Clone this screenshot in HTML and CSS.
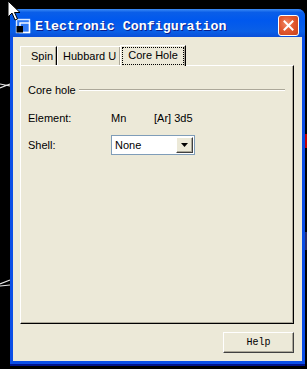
FILE: index.html
```html
<!DOCTYPE html>
<html>
<head>
  <meta charset="UTF-8">
  <title>Electronic Configuration</title>
  <link rel="stylesheet" href="styles.css">
</head>
<body>
  <svg class="backdrop" width="307" height="369" viewBox="0 0 307 369">
    <path d="M0 88 L10 84 M0 84 L10 86" stroke="#e8e8e8" stroke-width="1.2"/>
    <path d="M0 284 L10 280 M0 286 L10 285" stroke="#e8e8e8" stroke-width="1.2"/>
    <rect x="303" y="134" width="4" height="14" fill="#c00000"/>
    <rect x="303" y="232" width="4" height="18" fill="#2a2c6a"/>
  </svg>
  <div class="window">
    <div class="titlebar">
      <svg class="app-icon" width="16" height="16" viewBox="0 0 16 16">
        <rect x="1.5" y="1.5" width="13" height="13" fill="#2f7af5" stroke="#d8e8ff" stroke-width="1.4"/>
        <rect x="5" y="5" width="9.5" height="9.5" fill="none" stroke="#ffffff" stroke-width="1.4"/>
        <rect x="1.5" y="8" width="6.5" height="6.5" fill="#000"/>
      </svg>
      <div class="title">Electronic Configuration</div>
      <div class="close-btn">
        <svg width="11" height="11" viewBox="0 0 11 11"><path d="M1.5 1.5 L9.5 9.5 M9.5 1.5 L1.5 9.5" stroke="#fff" stroke-width="2" stroke-linecap="square"/></svg>
      </div>
    </div>
    <div class="client">
      <div class="tabs">
        <div class="tab">Spin</div>
        <div class="tab">Hubbard U</div>
        <div class="tab active"><span class="focus">Core Hole</span></div>
      </div>
      <div class="panel">
        <div class="group-head">
          <span>Core hole</span>
          <div class="group-line"></div>
        </div>
        <div class="row">
          <div class="label">Element:</div>
          <div class="value">Mn</div>
          <div>[Ar] 3d5</div>
        </div>
        <div class="row shell">
          <div class="label">Shell:</div>
          <div class="combo">
            <span>None</span>
            <div class="combo-btn"><svg width="7" height="4" viewBox="0 0 7 4"><path d="M0 0 H7 L3.5 4 Z" fill="#000"/></svg></div>
          </div>
        </div>
      </div>
      <div class="footer">
        <div class="button">Help</div>
      </div>
    </div>
  </div>
  <svg class="cursor" width="14" height="22" viewBox="0 0 14 22">
    <path d="M1 1 L1 17 L5 13 L8 20 L10.5 19 L7.5 12.5 L13 12.5 Z" fill="#fff" stroke="#000" stroke-width="1"/>
  </svg>
</body>
</html>
```

FILE: styles.css
```css
* { box-sizing: border-box; }
html, body { margin: 0; height: 369px; overflow: hidden; }
body { background: #000; font-family: "Liberation Sans", Arial, sans-serif; font-size: 11px; color: #000; position: relative; }
.backdrop { position: absolute; left: 0; top: 0; }

.window { position: relative; margin: 9px 0 0 10px; width: 295px; height: 357px; background: #0b4ee6; border-radius: 7px 7px 0 0; display: flex; flex-direction: column; border-bottom: 2px solid #00138c; }
.titlebar { height: 28px; flex: none; display: flex; align-items: center; padding: 5px 6px 0 5px; border-radius: 7px 7px 0 0;
  background: linear-gradient(to bottom, #3d8cf6 0%, #0a5ee8 12%, #0058ee 40%, #0a5fe6 80%, #0b4fd8 100%); }
.app-icon { flex: none; margin-right: 4px; }
.title { flex: 1; margin-top: 2px; color: #fff; font-family: "Liberation Mono", "Courier New", monospace; font-weight: bold; font-size: 13.3px; text-shadow: 1px 1px 0 #0a1e8c; }
.close-btn { width: 21px; height: 21px; border: 1px solid #fff; border-radius: 3px; display: flex; align-items: center; justify-content: center;
  background: radial-gradient(circle at 40% 40%, #f08a68 0%, #e2582f 45%, #c8411b 100%); }

.client { flex: 1; margin: 0 3px 3px 3px; background: #ece9d8; padding: 7px 8px 0 7px; display: flex; flex-direction: column; }

.tabs { display: flex; align-items: flex-end; height: 21px; position: relative; z-index: 1; }
.tab { height: 19px; padding: 3px 4px 0 5px; border-top: 1px solid #fff; border-left: 1px solid #fff; border-right: 1px solid #000; box-shadow: inset -1px 0 0 #aca899; background: #ece9d8; }
.tab:first-child { padding: 3px 3px 0 10px; }
.tab.active { height: 21px; margin-left: -1px; padding: 1px 1px 0 1px; margin-bottom: -1px; }
.tab.active .focus { display: inline-block; border: 1px dotted #000; padding: 1px 5px 2px 5px; line-height: 13px; }

.panel { flex: none; height: 259px; border-top: 1px solid #fff; border-left: 1px solid #fff; border-right: 1px solid #000; border-bottom: 1px solid #000;
  box-shadow: inset -1px -1px 0 #aca899; padding: 17px 8px 0 7px; }
.group-head { display: flex; align-items: center; height: 14px; }
.group-line { flex: 1; height: 2px; border-top: 1px solid #aca899; border-bottom: 1px solid #fff; margin-left: 3px; }
.row { display: flex; align-items: center; height: 14px; margin-top: 14px; }
.label { width: 83px; }
.value { width: 43px; }
.row.shell { margin-top: 10px; height: 20px; }
.combo { width: 84px; height: 20px; background: #fff; border: 1px solid #7f9db9; display: flex; align-items: center; padding-left: 3px; }
.combo span { flex: 1; }
.combo-btn { width: 17px; height: 16px; margin-right: 1px; background: #ece9d8; border-top: 1px solid #fff; border-left: 1px solid #fff; border-right: 1px solid #404040; border-bottom: 1px solid #404040;
  box-shadow: inset -1px -1px 0 #aca899; display: flex; align-items: center; justify-content: center; }

.footer { display: flex; justify-content: flex-end; padding-top: 8px; }
.button { width: 71px; height: 21px; border-top: 1px solid #fff; border-left: 1px solid #fff; border-right: 1px solid #404040; border-bottom: 1px solid #404040;
  box-shadow: inset -1px -1px 0 #aca899; display: flex; align-items: center; justify-content: center; font-family: "Liberation Mono", "Courier New", monospace; font-size: 10px; }

.cursor { position: absolute; left: 7px; top: 0; }
```
